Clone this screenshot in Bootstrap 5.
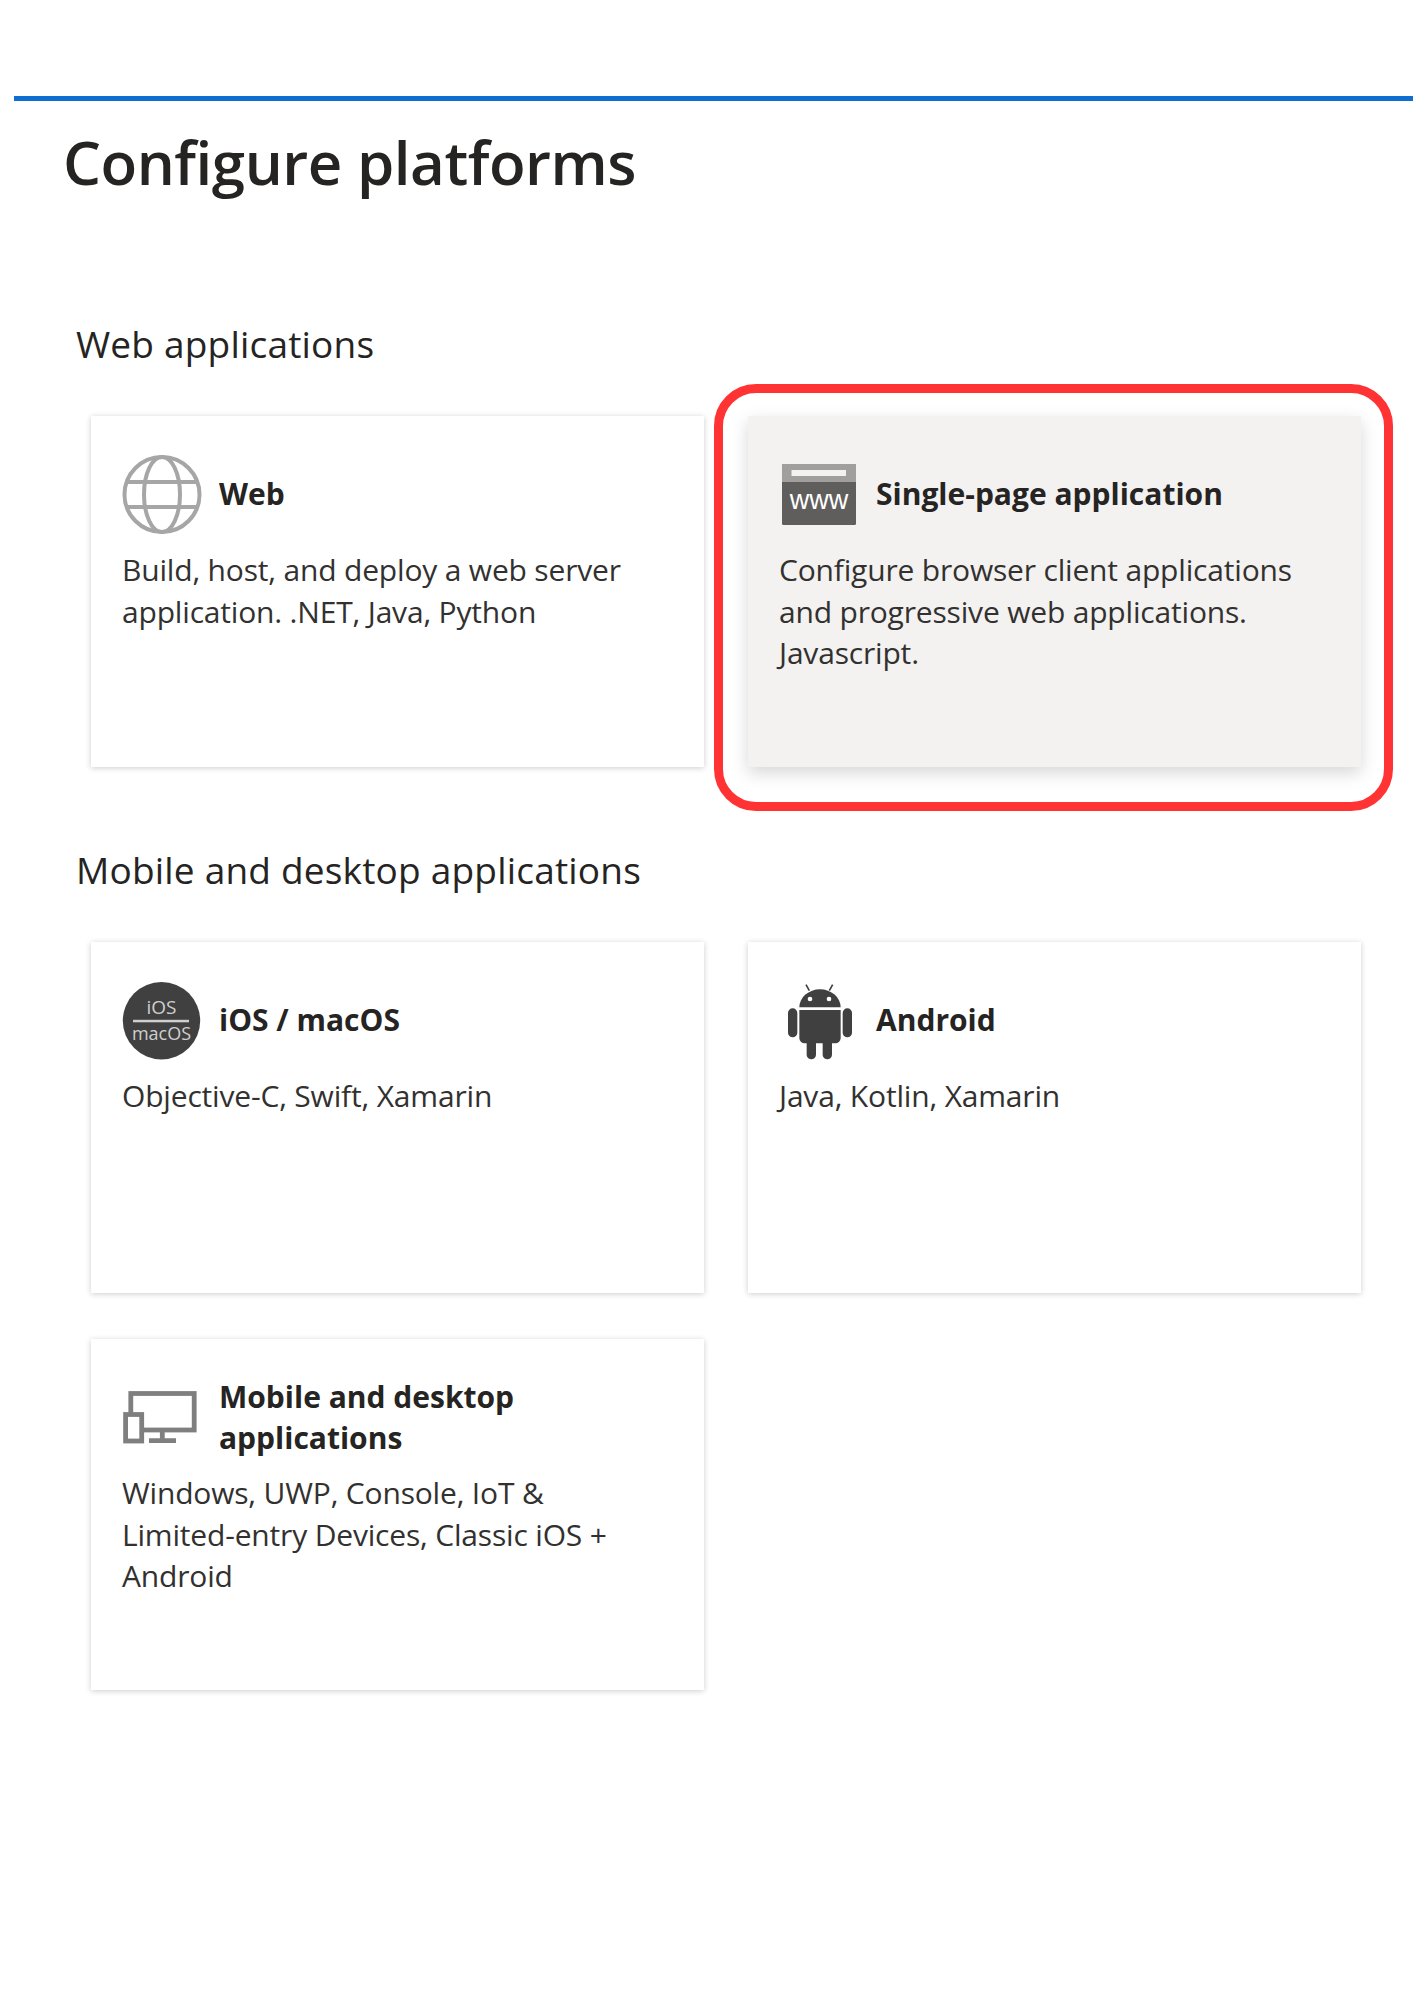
<!DOCTYPE html>
<html lang="en">
<head>
    <meta charset="UTF-8">
    <meta name="viewport" content="width=device-width, initial-scale=1.0">
    <title>Configure platforms</title>
    <link href="https://cdn.jsdelivr.net/npm/bootstrap@5.3.0/dist/css/bootstrap.min.css" rel="stylesheet">
    <style>
        body {
            background: #fff;
            color: #201f1e;
            font-family: "Open Sans", "Noto Sans", sans-serif;
            padding-top: 96px;
            padding-bottom: 120px;
        }
        .panel-wrap {
            margin: 0 1px 0 14px;
            border-top: 5px solid #0f6fd0;
            padding-left: 49px;
        }
        .panel-title {
            font-size: 60px;
            font-weight: 600;
            line-height: 80px;
            letter-spacing: -0.47px;
            margin: 21px 0 0;
            color: #252423;
        }
        .group-title {
            font-size: 37px;
            font-weight: 400;
            line-height: 50px;
            letter-spacing: 0.2px;
            color: #252423;
            margin: 0 0 47px -15px;
        }
        .group-first { margin-top: 117px; }
        .group-next { margin-top: 78px; margin-bottom: 47px; }
        .card-area {
            width: 1270px;
            margin-left: 28px;
        }
        .card-row {
            --bs-gutter-x: 44px;
            --bs-gutter-y: 46px;
        }
        .platform-card {
            height: 351px;
            padding: 35px 31px 0;
            box-shadow: 0 1px 6px rgba(0, 0, 0, 0.2);
        }
        .platform-card.picked {
            background: #f3f2f1;
            box-shadow: 0 6px 16px rgba(0, 0, 0, 0.16);
        }
        .card-head {
            min-height: 88px;
            gap: 17px;
            margin-bottom: 10px;
        }
        .card-icon {
            width: 80px;
            height: 80px;
            flex: none;
        }
        .card-name {
            font-size: 30px;
            font-weight: 700;
            line-height: 41.5px;
            margin: 0 0 2px;
            color: #252423;
        }
        .card-text {
            font-size: 30px;
            line-height: 41.5px;
            letter-spacing: -0.18px;
            margin: 0;
            color: #323130;
        }
        .red-frame {
            position: absolute;
            top: -32px;
            left: -34px;
            right: -32px;
            bottom: -44px;
            border: 9px solid #ff3333;
            border-radius: 42px;
            pointer-events: none;
        }
    </style>
</head>
<body>
    <div class="panel-wrap">
        <h1 class="panel-title">Configure platforms</h1>
        <div class="card-area">
            <h2 class="group-title group-first">Web applications</h2>
            <div class="row card-row">
                <div class="col-6">
                    <div class="card border-0 rounded-0 platform-card">
                        <div class="d-flex align-items-center card-head">
                            <svg class="card-icon" viewBox="0 0 80 80">
                                <g fill="none" stroke="#a6a6a6" stroke-width="4">
                                    <circle cx="40" cy="39.5" r="37.5"/>
                                    <ellipse cx="40" cy="39.5" rx="18" ry="37.5"/>
                                    <path d="M5 27h70M5 52h70"/>
                                </g>
                            </svg>
                            <h3 class="card-name">Web</h3>
                        </div>
                        <p class="card-text">Build, host, and deploy a web server application. .NET, Java, Python</p>
                    </div>
                </div>
                <div class="col-6">
                    <div class="card border-0 rounded-0 platform-card picked position-relative">
                        <div class="d-flex align-items-center card-head">
                            <svg class="card-icon" viewBox="0 0 80 80">
                                <rect x="3" y="9" width="74" height="61" rx="1.5" fill="#605e5c"/>
                                <path d="M3 10.5a1.5 1.5 0 0 1 1.5-1.5h71a1.5 1.5 0 0 1 1.5 1.5v16.5h-74z" fill="#a19f9d"/>
                                <rect x="12.5" y="15" width="54.5" height="6" fill="#f3f2f1"/>
                                <text x="40" y="54" text-anchor="middle" fill="#fff" font-size="27" font-family="Liberation Sans, sans-serif">www</text>
                            </svg>
                            <h3 class="card-name">Single-page application</h3>
                        </div>
                        <p class="card-text">Configure browser client applications and progressive web applications. Javascript.</p>
                        <div class="red-frame"></div>
                    </div>
                </div>
            </div>

            <h2 class="group-title group-next">Mobile and desktop applications</h2>
            <div class="row card-row">
                <div class="col-6">
                    <div class="card border-0 rounded-0 platform-card">
                        <div class="d-flex align-items-center card-head">
                            <svg class="card-icon" viewBox="0 0 80 80">
                                <circle cx="39.5" cy="39.7" r="38.7" fill="#404040"/>
                                <g fill="#cfcfcf" text-anchor="middle" font-family="Open Sans, sans-serif">
                                    <text x="39.5" y="33" font-size="19">iOS</text>
                                    <text x="39.5" y="59" font-size="18">macOS</text>
                                </g>
                                <rect x="11" y="38.8" width="56" height="2.5" fill="#cfcfcf"/>
                            </svg>
                            <h3 class="card-name">iOS / macOS</h3>
                        </div>
                        <p class="card-text">Objective-C, Swift, Xamarin</p>
                    </div>
                </div>
                <div class="col-6">
                    <div class="card border-0 rounded-0 platform-card">
                        <div class="d-flex align-items-center card-head">
                            <svg class="card-icon" viewBox="57 63 240 240">
                                <g fill="#404040">
                                    <path d="M118 142a62 54 0 0 1 124 0z"/>
                                    <path d="M118 150h124v84a16 16 0 0 1-16 16h-92a16 16 0 0 1-16-16z"/>
                                    <rect x="84" y="145" width="28" height="87" rx="14"/>
                                    <rect x="248" y="145" width="28" height="87" rx="14"/>
                                    <rect x="140" y="230" width="28" height="68" rx="14"/>
                                    <rect x="188" y="230" width="28" height="68" rx="14"/>
                                </g>
                                <path d="M148 92l-10-18M208 92l10-18" stroke="#404040" stroke-width="5" fill="none"/>
                                <circle cx="150" cy="117" r="7" fill="#fff"/>
                                <circle cx="207" cy="117" r="7" fill="#fff"/>
                            </svg>
                            <h3 class="card-name">Android</h3>
                        </div>
                        <p class="card-text">Java, Kotlin, Xamarin</p>
                    </div>
                </div>
                <div class="col-6">
                    <div class="card border-0 rounded-0 platform-card">
                        <div class="d-flex align-items-center card-head">
                            <svg class="card-icon" viewBox="0 0 80 80">
                                <g fill="none" stroke="#7f7f7f" stroke-width="4.8">
                                    <rect x="8.8" y="15.5" width="63.4" height="36.5"/>
                                    <rect x="3.6" y="36.5" width="16.1" height="26.5" fill="#fff"/>
                                    <path d="M40.3 52v10M27 62.7h27"/>
                                </g>
                            </svg>
                            <h3 class="card-name">Mobile and desktop applications</h3>
                        </div>
                        <p class="card-text">Windows, UWP, Console, IoT &amp;<br>Limited-entry Devices, Classic iOS + Android</p>
                    </div>
                </div>
            </div>
        </div>
    </div>
    <script src="https://cdn.jsdelivr.net/npm/bootstrap@5.3.0/dist/js/bootstrap.bundle.min.js"></script>
</body>
</html>
